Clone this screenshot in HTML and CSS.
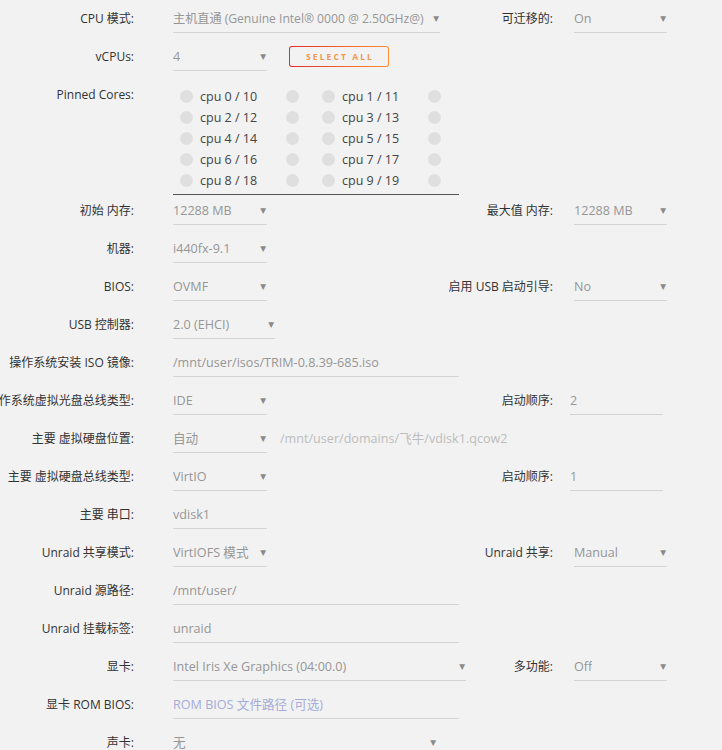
FILE: index.html
```html
<html>
<head>
<meta name="viewport" content="width=device-width, initial-scale=1">
<link rel="stylesheet" href="styles.css">
</head>
<body>
	<div class="form">
		<div class="row">
			<div class="lbl">CPU 模式:</div>
			<div class="col">
				<div class="field w267"><span class="val tight">主机直通 (Genuine Intel® 0000 @ 2.50GHz@)</span><span class="caret">▼</span></div>
			</div>
			<div class="lbl lbl-r">可迁移的:</div>
			<div class="col-r">
				<div class="field w93"><span class="val">On</span><span class="caret">▼</span></div>
			</div>
		</div>

		<div class="row">
			<div class="lbl">vCPUs:</div>
			<div class="col">
				<div class="field w94"><span class="val">4</span><span class="caret">▼</span></div>
				<button class="btn">Select All</button>
			</div>
		</div>

		<div class="row row-cores">
			<div class="lbl">Pinned Cores:</div>
			<div class="col">
				<div class="cores">
					<div class="line"><div class="core"><i class="dot first"></i><span>cpu 0 / 10</span><i class="dot"></i></div><div class="core"><i class="dot first"></i><span>cpu 1 / 11</span><i class="dot"></i></div></div>
					<div class="line"><div class="core"><i class="dot first"></i><span>cpu 2 / 12</span><i class="dot"></i></div><div class="core"><i class="dot first"></i><span>cpu 3 / 13</span><i class="dot"></i></div></div>
					<div class="line"><div class="core"><i class="dot first"></i><span>cpu 4 / 14</span><i class="dot"></i></div><div class="core"><i class="dot first"></i><span>cpu 5 / 15</span><i class="dot"></i></div></div>
					<div class="line"><div class="core"><i class="dot first"></i><span>cpu 6 / 16</span><i class="dot"></i></div><div class="core"><i class="dot first"></i><span>cpu 7 / 17</span><i class="dot"></i></div></div>
					<div class="line"><div class="core"><i class="dot first"></i><span>cpu 8 / 18</span><i class="dot"></i></div><div class="core"><i class="dot first"></i><span>cpu 9 / 19</span><i class="dot"></i></div></div>
				</div>
			</div>
		</div>

		<div class="row">
			<div class="lbl">初始 内存:</div>
			<div class="col">
				<div class="field w94"><span class="val">12288 MB</span><span class="caret">▼</span></div>
			</div>
			<div class="lbl lbl-r">最大值 内存:</div>
			<div class="col-r">
				<div class="field w93"><span class="val">12288 MB</span><span class="caret">▼</span></div>
			</div>
		</div>

		<div class="row">
			<div class="lbl">机器:</div>
			<div class="col">
				<div class="field w94"><span class="val">i440fx-9.1</span><span class="caret">▼</span></div>
			</div>
		</div>

		<div class="row">
			<div class="lbl">BIOS:</div>
			<div class="col">
				<div class="field w94"><span class="val">OVMF</span><span class="caret">▼</span></div>
			</div>
			<div class="lbl lbl-r">启用 USB 启动引导:</div>
			<div class="col-r">
				<div class="field w93"><span class="val">No</span><span class="caret">▼</span></div>
			</div>
		</div>

		<div class="row">
			<div class="lbl">USB 控制器:</div>
			<div class="col">
				<div class="field w102"><span class="val">2.0 (EHCI)</span><span class="caret">▼</span></div>
			</div>
		</div>

		<div class="row">
			<div class="lbl">操作系统安装 ISO 镜像:</div>
			<div class="col">
				<div class="field w286"><span class="val">/mnt/user/isos/TRIM-0.8.39-685.iso</span></div>
			</div>
		</div>

		<div class="row">
			<div class="lbl">操作系统虚拟光盘总线类型:</div>
			<div class="col">
				<div class="field w94"><span class="val">IDE</span><span class="caret">▼</span></div>
			</div>
			<div class="lbl lbl-r">启动顺序:</div>
			<div class="col-r">
				<div class="field w93 order"><span class="val">2</span></div>
			</div>
		</div>

		<div class="row">
			<div class="lbl">主要 虚拟硬盘位置:</div>
			<div class="col">
				<div class="field w94"><span class="val">自动</span><span class="caret">▼</span></div>
				<span class="path">/mnt/user/domains/飞牛/vdisk1.qcow2</span>
			</div>
		</div>

		<div class="row">
			<div class="lbl">主要 虚拟硬盘总线类型:</div>
			<div class="col">
				<div class="field w94"><span class="val">VirtIO</span><span class="caret">▼</span></div>
			</div>
			<div class="lbl lbl-r">启动顺序:</div>
			<div class="col-r">
				<div class="field w93 order"><span class="val">1</span></div>
			</div>
		</div>

		<div class="row">
			<div class="lbl">主要 串口:</div>
			<div class="col">
				<div class="field w94"><span class="val">vdisk1</span></div>
			</div>
		</div>

		<div class="row">
			<div class="lbl">Unraid 共享模式:</div>
			<div class="col">
				<div class="field w94"><span class="val">VirtIOFS 模式</span><span class="caret">▼</span></div>
			</div>
			<div class="lbl lbl-r">Unraid 共享:</div>
			<div class="col-r">
				<div class="field w93"><span class="val">Manual</span><span class="caret">▼</span></div>
			</div>
		</div>

		<div class="row">
			<div class="lbl">Unraid 源路径:</div>
			<div class="col">
				<div class="field w286"><span class="val">/mnt/user/</span></div>
			</div>
		</div>

		<div class="row">
			<div class="lbl">Unraid 挂载标签:</div>
			<div class="col">
				<div class="field w286"><span class="val">unraid</span></div>
			</div>
		</div>

		<div class="row">
			<div class="lbl">显卡:</div>
			<div class="col">
				<div class="field w293"><span class="val">Intel Iris Xe Graphics (04:00.0)</span><span class="caret">▼</span></div>
			</div>
			<div class="lbl lbl-r">多功能:</div>
			<div class="col-r">
				<div class="field w93"><span class="val">Off</span><span class="caret">▼</span></div>
			</div>
		</div>

		<div class="row">
			<div class="lbl">显卡 ROM BIOS:</div>
			<div class="col">
				<div class="field w286"><span class="val ph">ROM BIOS 文件路径 (可选)</span></div>
			</div>
		</div>

		<div class="row">
			<div class="lbl">声卡:</div>
			<div class="col">
				<div class="field w264"><span class="val">无</span><span class="caret">▼</span></div>
			</div>
		</div>
	</div>
</body>
</html>
```

FILE: styles.css
```css
body {
	margin: 0;
	background: #f2f2f2;
	color: #333;
	font-family: "Open Sans", "Noto Sans CJK SC", sans-serif;
	font-size: 12px;
	overflow: hidden;
}
.form {
	width: 722px;
}
.row {
	display: flex;
	align-items: flex-start;
	padding: 8px 0 5px;
}
.row-cores {
	padding-bottom: 0;
	margin-bottom: -3px;
}
.lbl {
	flex: none;
	width: 134px;
	margin-right: 39px;
	display: flex;
	justify-content: flex-end;
	white-space: nowrap;
	line-height: 20px;
	padding-top: 1px;
	color: #333;
}
.lbl-r {
	width: 83px;
	margin-right: 21px;
}
.col {
	flex: none;
	width: 297px;
	display: flex;
	align-items: flex-start;
}
.col-r {
	flex: none;
	width: 93px;
}

/* underlined inputs and selects */
.field {
	flex: none;
	display: flex;
	box-sizing: border-box;
	line-height: 20px;
	padding-top: 1px;
	padding-bottom: 3px;
	border-bottom: 1px solid #d4d4d4;
	font-size: 12.6px;
	color: #969696;
}
.val {
	white-space: nowrap;
	overflow: hidden;
}
.val.tight {
	font-size: 12.2px;
	letter-spacing: -0.05px;
}
.caret {
	margin-left: auto;
	padding-left: 1px;
	padding-right: 1px;
	font-family: "DejaVu Sans", sans-serif;
	font-size: 7.5px;
	color: #8a8a8a;
}
.ph {
	color: #a5acd7;
}
.order {
	margin-left: -4px;
}
.w93 { width: 93px; }
.w94 { width: 94px; }
.w102 { width: 102px; }
.w264 { width: 264px; }
.w267 { width: 267px; }
.w286 { width: 286px; }
.w293 { width: 293px; }

.path {
	margin-left: 13px;
	padding-top: 1px;
	line-height: 20px;
	font-size: 12.6px;
	white-space: nowrap;
	color: #bdbdbd;
}

.btn {
	flex: none;
	margin-left: 22px;
	width: 100px;
	height: 21px;
	padding: 0 0 0 2px;
	box-sizing: border-box;
	border: 1px solid transparent;
	border-radius: 3px;
	background: linear-gradient(#f2f2f2, #f2f2f2) padding-box, linear-gradient(90deg, #e22b2b, #ff8f35) border-box;
	font-family: "Open Sans", sans-serif;
	font-size: 8.5px;
	font-weight: 700;
	letter-spacing: 2.1px;
	text-transform: uppercase;
	color: #f0984e;
}

/* pinned cores */
.cores {
	width: 286px;
	padding: 2px 0 3px;
	border-bottom: 1px solid #555;
	font-size: 12.5px;
	color: #444;
}
.line {
	display: flex;
	height: 21px;
	align-items: center;
}
.core {
	display: flex;
	align-items: center;
	width: 142px;
}
.core span {
	width: 86px;
	margin-left: 7px;
	white-space: nowrap;
}
.dot {
	width: 13px;
	height: 13px;
	border-radius: 50%;
	background: #dfdfdf;
}
.dot.first {
	margin-left: 7px;
}
```
